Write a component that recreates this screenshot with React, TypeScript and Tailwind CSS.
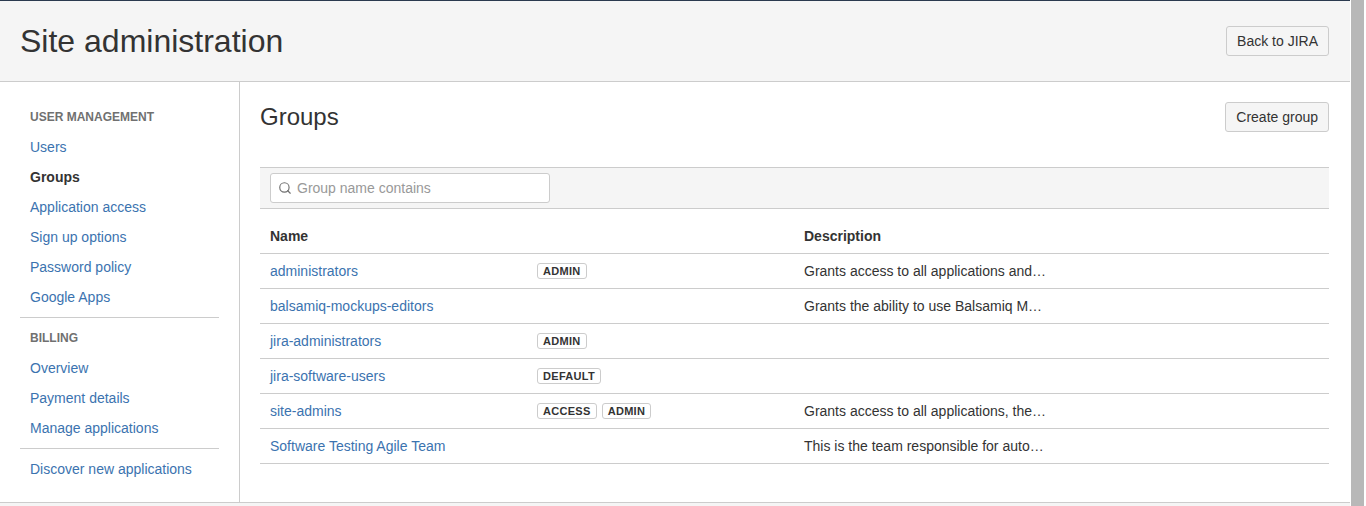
import React from 'react';
import { Search } from 'lucide-react';

const groups = [
  { name: 'administrators', tags: ['ADMIN'], description: 'Grants access to all applications and…' },
  { name: 'balsamiq-mockups-editors', tags: [], description: 'Grants the ability to use Balsamiq M…' },
  { name: 'jira-administrators', tags: ['ADMIN'], description: '' },
  { name: 'jira-software-users', tags: ['DEFAULT'], description: '' },
  { name: 'site-admins', tags: ['ACCESS', 'ADMIN'], description: 'Grants access to all applications, the…' },
  { name: 'Software Testing Agile Team', tags: [], description: 'This is the team responsible for auto…' },
];

const NavLink = ({ label, active = false }: { label: string; active?: boolean }) => (
  <a className={`block h-[30px] pl-[10px] leading-[30px] ${active ? 'font-bold text-[#333333]' : 'text-[#3b73af]'}`}>
    {label}
  </a>
);

const NavHeading = ({ label }: { label: string }) => (
  <div className="h-[30px] pl-[10px] text-xs font-bold uppercase leading-[30px] text-[#707070]">{label}</div>
);

export default function App() {
  return (
    <div className="flex h-[506px] overflow-hidden bg-white text-[14px] text-[#333333] [font-family:'Liberation_Sans',Arial,sans-serif]">
      <div className="flex w-[1350px] flex-col">
        {/* Header */}
        <header className="flex h-[82px] items-center justify-between border-t border-b border-t-[#2b3a4f] border-b-[#cccccc] bg-[#f5f5f5] pl-5 pr-[21px]">
          <h1 className="text-[32px] leading-10">Site administration</h1>
          <button className="h-[30px] rounded-[3px] border border-[#cccccc] bg-[#f5f5f5] px-[10px] text-[#333333]">
            Back to JIRA
          </button>
        </header>

        <div className="flex h-[420px]">
          {/* Sidebar */}
          <nav className="w-[240px] shrink-0 border-r border-[#cccccc] px-5 pt-5">
            <NavHeading label="User management" />
            <NavLink label="Users" />
            <NavLink label="Groups" active />
            <NavLink label="Application access" />
            <NavLink label="Sign up options" />
            <NavLink label="Password policy" />
            <NavLink label="Google Apps" />
            <div className="mt-[5px] mb-[5px] w-[199px] border-t border-[#cccccc]" />
            <NavHeading label="Billing" />
            <NavLink label="Overview" />
            <NavLink label="Payment details" />
            <NavLink label="Manage applications" />
            <div className="mt-[5px] mb-[5px] w-[199px] border-t border-[#cccccc]" />
            <NavLink label="Discover new applications" />
          </nav>

          {/* Main */}
          <main className="flex-1 pt-5 pl-5 pr-[21px]">
            <div className="flex items-start justify-between">
              <h2 className="text-2xl leading-[30px]">Groups</h2>
              <button className="h-[30px] rounded-[3px] border border-[#cccccc] bg-[#f5f5f5] px-[10px] text-[#333333]">
                Create group
              </button>
            </div>

            <div className="mt-[35px] flex h-[42px] items-center border-y border-[#cccccc] bg-[#f5f5f5] px-[10px]">
              <div className="flex h-[30px] w-[280px] items-center rounded-[3px] border border-[#cccccc] bg-white pl-[7px]">
                <Search className="h-[14px] w-[14px] text-[#707070]" strokeWidth={2} />
                <span className="ml-[5px] text-[#999999]">Group name contains</span>
              </div>
            </div>

            <div className="flex h-[45px] items-center border-b border-[#cccccc] px-[10px] pt-[10px] font-bold">
              <span className="w-[534px]">Name</span>
              <span>Description</span>
            </div>

            {groups.map((group) => (
              <div key={group.name} className="flex h-[35px] items-center border-b border-[#cccccc] pl-[10px]">
                <a className="w-[267px] shrink-0 text-[#3b73af]">{group.name}</a>
                <div className="flex w-[267px] shrink-0 gap-[5px]">
                  {group.tags.map((tag) => (
                    <span
                      key={tag}
                      className="h-[16px] rounded-[3px] border border-[#cccccc] bg-white px-[5px] text-[11px] font-bold leading-[14px] tracking-[0.3px] text-[#333333]"
                    >
                      {tag}
                    </span>
                  ))}
                </div>
                <span>{group.description}</span>
              </div>
            ))}
          </main>
        </div>

        <footer className="h-[4px] border-t border-[#cccccc] bg-[#f5f5f5]" />
      </div>

      {/* Browser scrollbar */}
      <div className="ml-px w-[13px] bg-[#b8b8b8]" />
    </div>
  );
}
